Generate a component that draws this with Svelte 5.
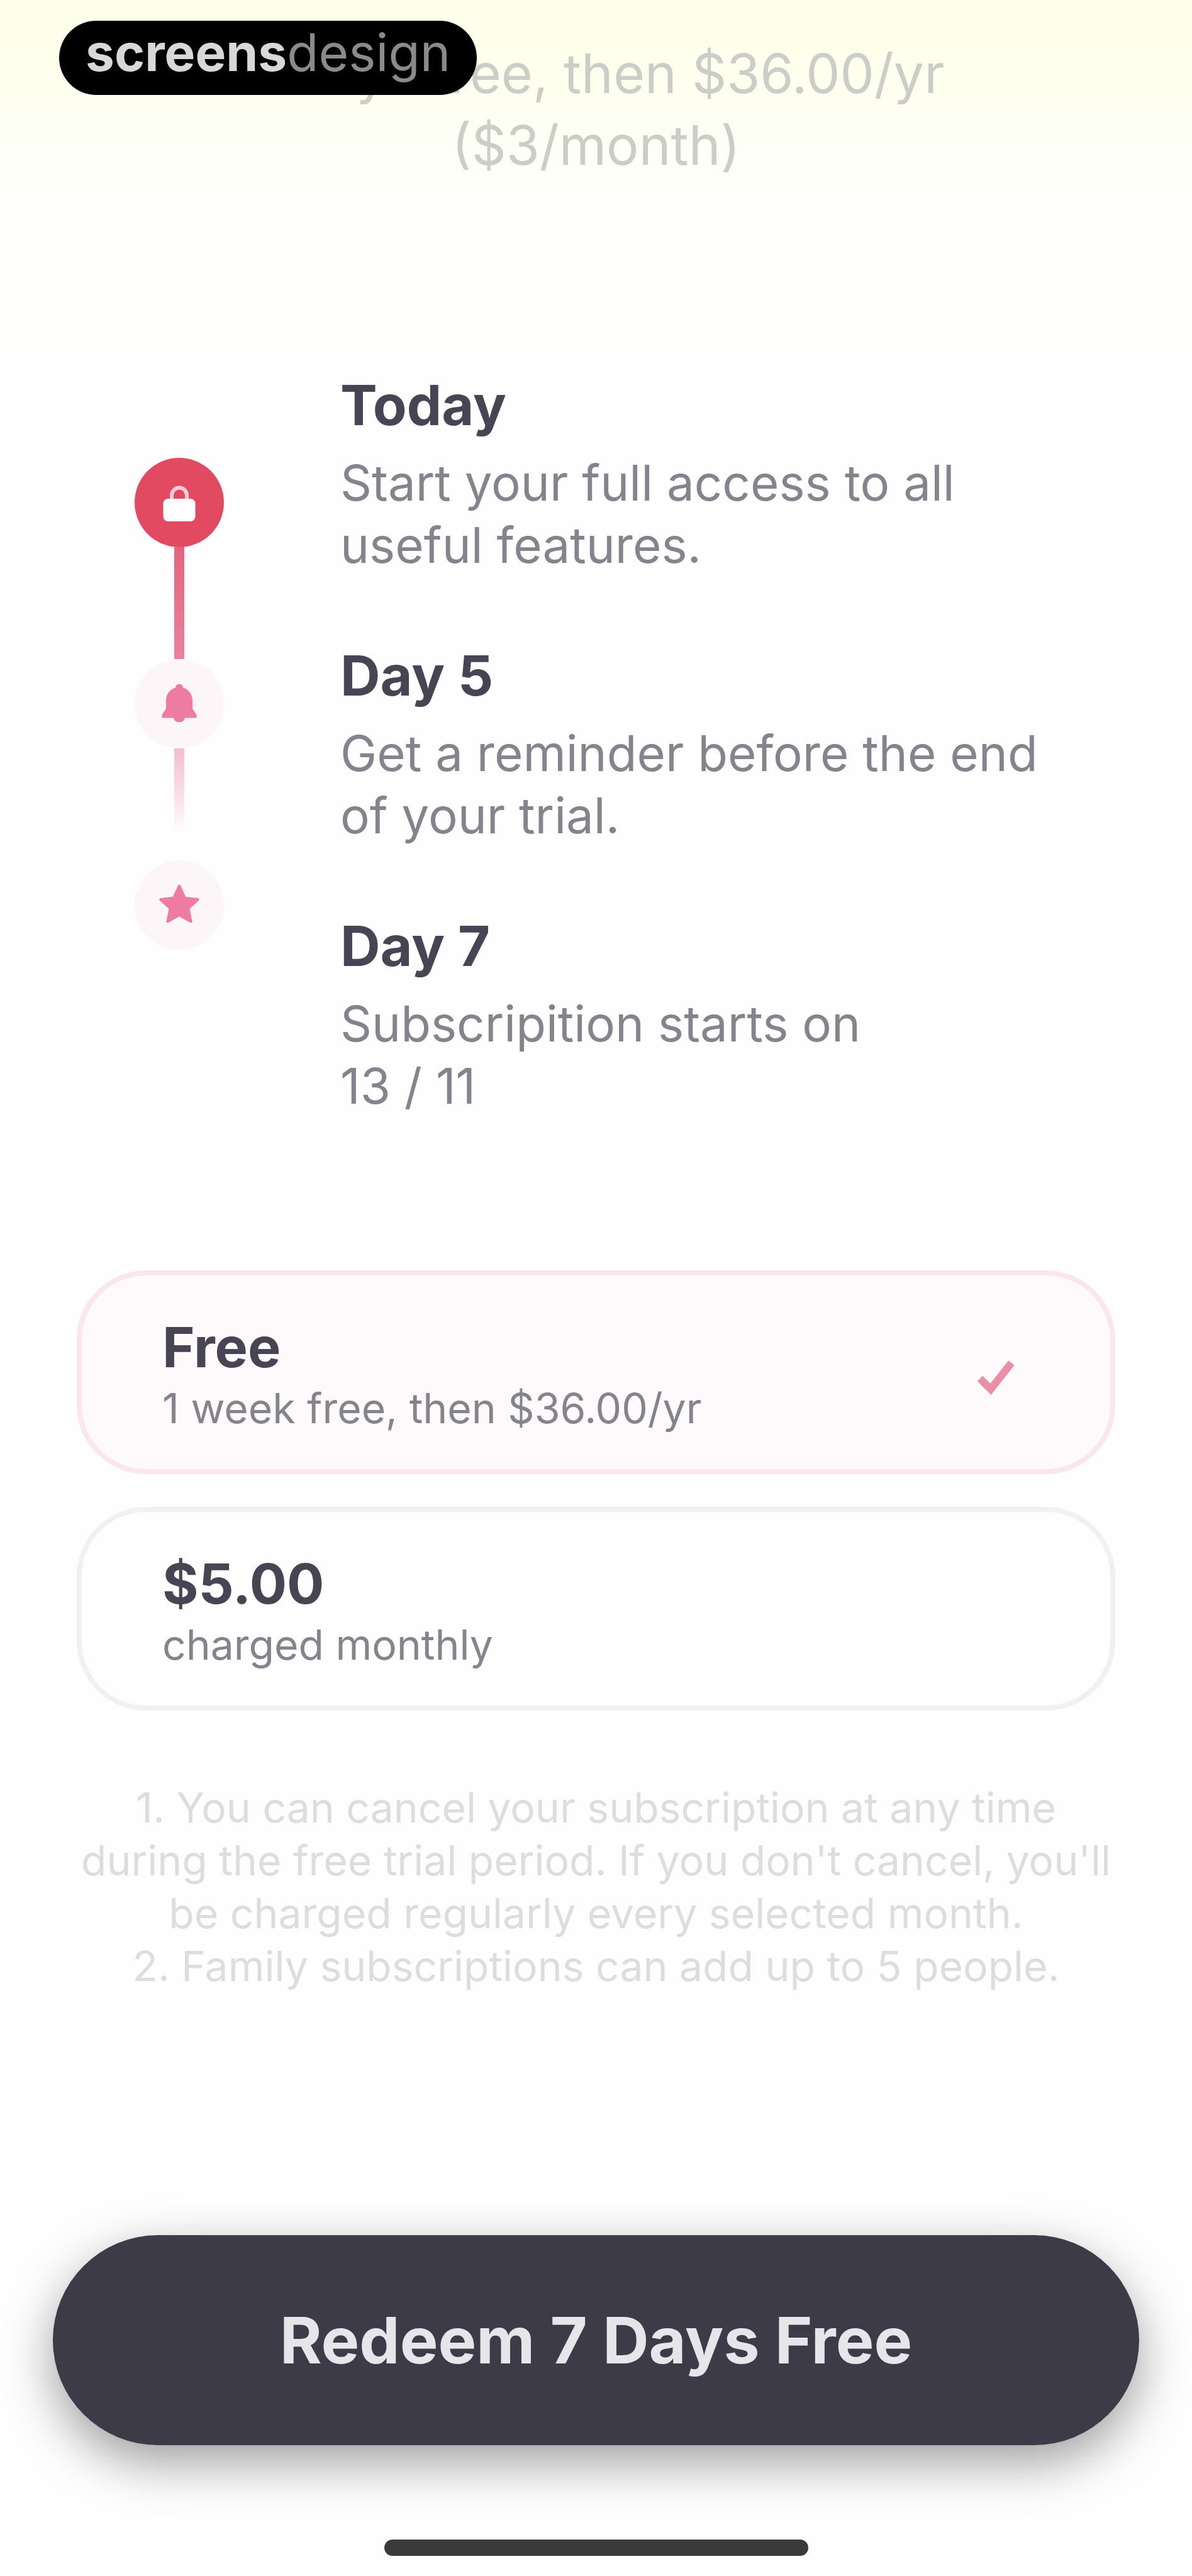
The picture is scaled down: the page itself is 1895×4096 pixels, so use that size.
<script lang="ts">
  type Step = { title: string; text: string };
  type Plan = { id: string; title: string; text: string };

  const steps: Step[] = [
    { title: "Today", text: "Start your full access to all useful features." },
    { title: "Day 5", text: "Get a reminder before the end of your trial." },
    { title: "Day 7", text: "Subscripition starts on\n13 / 11" },
  ];

  const plans: Plan[] = [
    { id: "yearly", title: "Free", text: "1 week free, then $36.00/yr" },
    { id: "monthly", title: "$5.00", text: "charged monthly" },
  ];

  let selected = $state("yearly");
</script>

<main class="paywall">
  <div class="badge"><strong>screens</strong><span>design</span></div>

  <p class="price">7 days free, then $36.00/yr<br>($3/month)</p>

  <section class="timeline">
    <div class="rail" aria-hidden="true">
      <span class="dot active">
        <svg viewBox="0 0 24 24" width="72" height="72">
          <path d="M8 11V8.2a4 4 0 0 1 8 0V11" fill="none" stroke="#f9cdd5" stroke-width="2" />
          <rect x="3.5" y="10" width="17" height="12" rx="2.5" fill="#fff" />
        </svg>
      </span>
      <span class="line"></span>
      <span class="dot">
        <svg viewBox="0 0 24 24" width="72" height="72">
          <path
            d="M12 1.5a2 2 0 0 0-2 2C6.800 4.500 5 7 5 10.500v4L2.800 18v1.500h18.400V18L19 14.500v-4c0-3.500-1.800-6-5-7a2 2 0 0 0-2-2zM9 19.500a3 2.300 0 0 0 6 0z"
            fill="#ee7ba2"
          />
        </svg>
      </span>
      <span class="line fading"></span>
      <span class="dot">
        <svg viewBox="0 0 24 24" width="72" height="72">
          <path
            d="M12 2l2.900 6.300 6.900.8-5.100 4.700 1.400 6.900L12 17.300l-6.100 3.400 1.400-6.900L2.200 9.100l6.900-.8z"
            fill="#ee7ba2"
            stroke="#ee7ba2"
            stroke-width="1.500"
            stroke-linejoin="round"
          />
        </svg>
      </span>
    </div>

    <ol class="steps">
      {#each steps as step}
        <li>
          <h2>{step.title}</h2>
          <p>{step.text}</p>
        </li>
      {/each}
    </ol>
  </section>

  <div class="plans" role="radiogroup" aria-label="Plan">
    {#each plans as plan}
      <label class="plan" class:selected={selected === plan.id}>
        <input type="radio" name="plan" value={plan.id} bind:group={selected}>
        <span class="plan-copy">
          <strong>{plan.title}</strong>
          <small>{plan.text}</small>
        </span>
        {#if selected === plan.id}
          <svg class="check" viewBox="0 0 60 60" width="60" height="60" aria-hidden="true">
            <path d="M5 33l17 17L55 8" fill="none" stroke="#ea8fa6" stroke-width="12" />
          </svg>
        {/if}
      </label>
    {/each}
  </div>

  <p class="terms">
    1. You can cancel your subscription at any time<br>
    during the free trial period. If you don't cancel, you'll<br>
    be charged regularly every selected month.<br>
    2. Family subscriptions can add up to 5 people.
  </p>

  <footer>
    <button class="redeem" type="button">Redeem 7 Days Free</button>
    <span class="home-bar"></span>
  </footer>
</main>

<style>
  :global(body) {
    margin: 0;
    background: #fefefe;
  }

  .paywall {
    position: relative;
    display: flex;
    flex-direction: column;
    box-sizing: border-box;
    min-height: 100vh;
    padding: 60px 84px 32px;
    background: linear-gradient(180deg, #feffe8 0, #feffee 130px, #fefffa 300px, #fefefe 600px);
    font-family: Inter, "Liberation Sans", sans-serif;
    color: #474453;
  }

  .badge {
    position: absolute;
    top: 33px;
    left: 94px;
    display: flex;
    align-items: center;
    box-sizing: border-box;
    height: 118px;
    padding: 0 42px 16px;
    border-radius: 59px;
    background: #000;
    color: #d8d8d8;
    font-size: 82px;
    line-height: 1;
  }

  .badge span {
    color: #8a8a8a;
  }

  .price {
    margin: 0;
    font-size: 86px;
    line-height: 114px;
    text-align: center;
    color: #cdcdc8;
  }

  .timeline {
    display: flex;
    gap: 185px;
    margin: 306px 0 0 130px;
  }

  .rail {
    display: flex;
    flex-direction: column;
    align-items: center;
    padding-top: 134px;
  }

  .dot {
    display: grid;
    place-items: center;
    width: 142px;
    height: 142px;
    border-radius: 50%;
    background: #fdf6f9;
  }

  .dot.active {
    background: #e14a60;
  }

  .line {
    width: 16px;
    height: 178px;
    background: linear-gradient(180deg, #e4647e, #ec819e);
  }

  .line.fading {
    background: linear-gradient(180deg, #f3bccd, rgba(253, 240, 245, 0) 75%);
  }

  .steps {
    flex: 1;
    display: grid;
    gap: 108px;
    margin: 0;
    padding: 0;
    list-style: none;
  }

  h2 {
    margin: 0 0 24px;
    font-size: 88px;
    font-weight: 700;
    line-height: 100px;
  }

  .steps p {
    max-width: 1180px;
    margin: 0;
    font-size: 78px;
    line-height: 99px;
    white-space: pre-line;
    color: #85848c;
  }

  .plans {
    display: grid;
    gap: 52px;
    margin: 244px 38px 0;
  }

  .plan {
    position: relative;
    display: flex;
    align-items: center;
    justify-content: space-between;
    box-sizing: border-box;
    height: 324px;
    padding: 14px 152px 0 128px;
    border: 8px solid #f1f1f2;
    border-radius: 110px;
    cursor: pointer;
  }

  .plan.selected {
    border-color: #fae6ed;
    background: #fefafb;
  }

  .plan input {
    position: absolute;
    inset: 0;
    margin: 0;
    opacity: 0;
    cursor: pointer;
  }

  .plan-copy {
    display: grid;
  }

  .plan-copy strong {
    font-size: 88px;
    font-weight: 700;
    line-height: 100px;
  }

  .plan-copy small {
    font-size: 66px;
    line-height: 94px;
    color: #85848c;
  }

  .terms {
    margin: 112px 0 0;
    font-size: 66px;
    line-height: 84px;
    text-align: center;
    color: #dddddd;
  }

  footer {
    display: flex;
    flex-direction: column;
    align-items: center;
    gap: 150px;
    margin-top: auto;
  }

  .redeem {
    width: 100%;
    height: 334px;
    border: 0;
    border-radius: 167px;
    background: #3e3b49;
    box-shadow: 0 28px 80px rgba(0, 0, 0, 0.38);
    color: #e6e6ea;
    font: 700 102px / 1 Inter, "Liberation Sans", sans-serif;
    cursor: pointer;
  }

  .home-bar {
    width: 674px;
    height: 26px;
    border-radius: 13px;
    background: #3a3a3a;
  }
</style>
